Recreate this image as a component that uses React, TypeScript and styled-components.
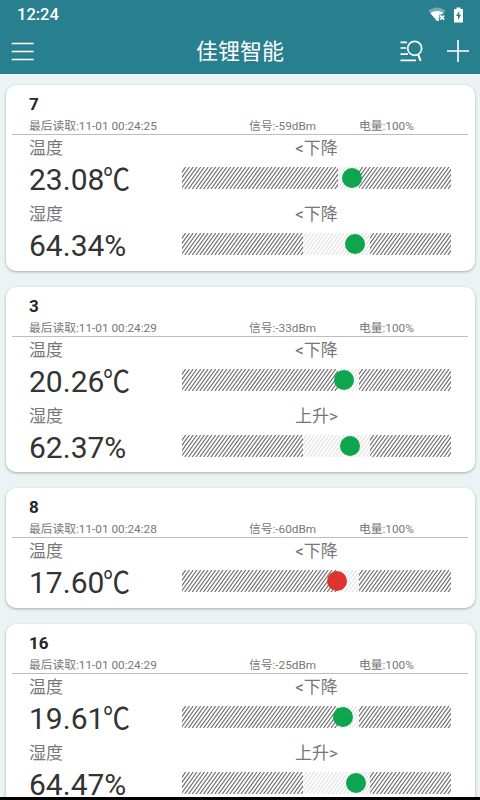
import React from 'react';
import styled, { createGlobalStyle } from 'styled-components';

const GlobalStyle = createGlobalStyle`
  * { box-sizing: border-box; }
  body { margin: 0; background: #ecf3f4; overflow: hidden; }
`;

const Screen = styled.div`
  width: 480px;
  height: 800px;
  display: flex;
  flex-direction: column;
  overflow: hidden;
  background: #ecf3f4;
  font-family: Roboto, 'Noto Sans CJK SC', sans-serif;
`;

const Header = styled.header`
  flex: none;
  height: 74px;
  background: #28808f;
  color: #fff;
`;

const StatusBar = styled.div`
  height: 29px;
  padding: 0 17px 0 17px;
  display: flex;
  align-items: center;
  justify-content: space-between;
  font-size: 16.5px;
  font-weight: 500;
`;

const StatusIcons = styled.div`
  display: flex;
  align-items: center;
  gap: 8px;
  svg { display: block; }
`;

const TitleBar = styled.div`
  height: 45px;
  display: grid;
  grid-template-columns: 1fr auto 1fr;
  align-items: center;
  padding: 0 11px;
  svg { display: block; margin-bottom: 2px; }
`;

const Title = styled.h1`
  margin: 0;
  font-size: 22px;
  line-height: 44px;
  font-weight: 400;
`;

const Actions = styled.div`
  display: flex;
  justify-content: flex-end;
  align-items: center;
  gap: 23px;
`;

const List = styled.main`
  flex: 1;
  min-height: 0;
  overflow: hidden;
  padding: 11px 5.5px 0;
  display: flex;
  flex-direction: column;
  gap: 16px;
`;

const Card = styled.section`
  flex: none;
  background: #fff;
  border-radius: 10px;
  padding: 0 6.5px 3.7px;
  box-shadow: 0 1px 3px rgba(0, 0, 0, 0.3);
`;

const Name = styled.h2`
  margin: 0;
  height: 33px;
  padding: 5px 17px 0;
  font-size: 17px;
  line-height: 28px;
  font-weight: 700;
  color: #262626;
`;

const Meta = styled.div`
  height: 17px;
  padding-left: 17px;
  display: grid;
  grid-template-columns: 220px 110px 1fr;
  border-bottom: 1px solid #bdbdbd;
  font-size: 11.75px;
  line-height: 17px;
  color: #777;
  white-space: nowrap;
`;

const Measure = styled.div`
  height: 66px;
  padding-left: 17px;
  display: grid;
  grid-template-columns: 153px 269px;
  grid-template-rows: 25px 41px;
`;

const Label = styled.div`
  font-size: 17px;
  line-height: 26px;
  color: #777;
`;

const Trend = styled(Label)`
  text-align: center;
`;

const Value = styled.div`
  font-size: 30px;
  line-height: 39px;
  color: #333;
  white-space: nowrap;
`;

const Celsius = styled.span`
  display: inline-block;
  margin-left: -1px;
  transform: scaleX(0.9);
  transform-origin: left;
`;

const Track = styled.div`
  position: relative;
  height: 22px;
  margin-top: 7px;
  svg { display: block; }
`;

const Dot = styled.span<{ $alert?: boolean }>`
  position: absolute;
  top: 1px;
  width: 20px;
  height: 20px;
  border-radius: 50%;
  background: ${(p) => (p.$alert ? '#dd3431' : '#0da54d')};
`;

const NavStrip = styled.div`
  flex: none;
  height: 3px;
  background: #000;
`;

interface Reading {
  label: string;
  value: string;
  unit: '℃' | '%';
  trend: string;
  range: [number, number];
  at: number;
  alert?: boolean;
}

interface Sensor {
  name: string;
  time: string;
  signal: string;
  readings: Reading[];
}

const TEMP: [number, number] = [156, 177];
const HUMID: [number, number] = [121, 188];
const DOWN = '<下降';
const UP = '上升>';

const sensors: Sensor[] = [
  { name: '7', time: '11-01 00:24:25', signal: '-59dBm', readings: [
    { label: '温度', value: '23.08', unit: '℃', trend: DOWN, range: TEMP, at: 170 },
    { label: '湿度', value: '64.34', unit: '%', trend: DOWN, range: HUMID, at: 173 },
  ] },
  { name: '3', time: '11-01 00:24:29', signal: '-33dBm', readings: [
    { label: '温度', value: '20.26', unit: '℃', trend: DOWN, range: TEMP, at: 162 },
    { label: '湿度', value: '62.37', unit: '%', trend: UP, range: HUMID, at: 167.5 },
  ] },
  { name: '8', time: '11-01 00:24:28', signal: '-60dBm', readings: [
    { label: '温度', value: '17.60', unit: '℃', trend: DOWN, range: TEMP, at: 155, alert: true },
  ] },
  { name: '16', time: '11-01 00:24:29', signal: '-25dBm', readings: [
    { label: '温度', value: '19.61', unit: '℃', trend: DOWN, range: TEMP, at: 160.5 },
    { label: '湿度', value: '64.47', unit: '%', trend: UP, range: HUMID, at: 173.5 },
  ] },
];

function hatch(from: number, to: number) {
  let d = '';
  for (let x = from - 16; x < to; x += 3.75) d += `M${x} 22L${x + 16} 0`;
  return d;
}

function Hatching({ from, to, color }: { from: number; to: number; color: string }) {
  return (
    <svg x={from} width={to - from} height="22" viewBox={`${from} 0 ${to - from} 22`}>
      <path d={hatch(from, to)} stroke={color} strokeWidth="1.15" />
    </svg>
  );
}

function Gauge({ range, at, alert }: Pick<Reading, 'range' | 'at' | 'alert'>) {
  return (
    <Track>
      <svg width="269" height="22">
        <Hatching from={0} to={range[0]} color="#6a6a6a" />
        <Hatching from={range[0]} to={range[1]} color="#e2e2e2" />
        <Hatching from={range[1]} to={269} color="#6a6a6a" />
      </svg>
      <Dot $alert={alert} style={{ left: at - 10 }} />
    </Track>
  );
}

export default function App() {
  return (
    <>
      <GlobalStyle />
      <Screen>
        <Header>
          <StatusBar>
            <span>12:24</span>
            <StatusIcons>
              <svg width="18" height="16" viewBox="0 0 18 16">
                <path d="M0.5 4C5.5-.8 12.5-.8 17.5 4L9 14Z" fill="#fff" opacity=".35" />
                <path d="M2.4 6.3C6.5 3.2 11.5 3.2 15.6 6.3L10.8 7.8V14H9Z" fill="#fff" />
                <path d="M12.2 8.6l4 4M16.2 8.6l-4 4" stroke="#fff" strokeWidth="1.6" />
              </svg>
              <svg width="9" height="16" viewBox="0 0 9 16">
                <path d="M2.5 2V.5h4V2H9v13.5H0V2Z" fill="#fff" />
                <path d="M5.4 4L2 9h2v4l3.2-5.2H5.2Z" fill="#28808f" />
              </svg>
            </StatusIcons>
          </StatusBar>
          <TitleBar>
            <svg width="24" height="20" viewBox="0 0 24 20" stroke="#fff" strokeWidth="1.3">
              <path d="M.7 2.5H22.7M.7 10.5H22.7M.7 18.5H22.7" />
            </svg>
            <Title>佳锂智能</Title>
            <Actions>
              <svg width="24" height="24" viewBox="0 0 24 24" fill="none" stroke="#fff" strokeWidth="1.7">
                <path d="M.5 3.4H7M.5 9H6M.5 15.2H8M.5 21.4H16" />
                <circle cx="14.7" cy="9.3" r="7" />
                <path d="M18.2 15.5L20.6 21.9" strokeWidth="2" />
              </svg>
              <svg width="22" height="22" viewBox="0 0 22 22" stroke="#fff" strokeWidth="1.6">
                <path d="M11 0V22M0 11H22" />
              </svg>
            </Actions>
          </TitleBar>
        </Header>
        <List>
          {sensors.map((s) => (
            <Card key={s.name}>
              <Name>{s.name}</Name>
              <Meta>
                <span>最后读取:{s.time}</span>
                <span>信号:{s.signal}</span>
                <span>电量:100%</span>
              </Meta>
              {s.readings.map((r) => (
                <Measure key={r.label}>
                  <Label>{r.label}</Label>
                  <Trend>{r.trend}</Trend>
                  <Value>
                    {r.value}
                    {r.unit === '℃' ? <Celsius>℃</Celsius> : r.unit}
                  </Value>
                  <Gauge range={r.range} at={r.at} alert={r.alert} />
                </Measure>
              ))}
            </Card>
          ))}
        </List>
        <NavStrip />
      </Screen>
    </>
  );
}
